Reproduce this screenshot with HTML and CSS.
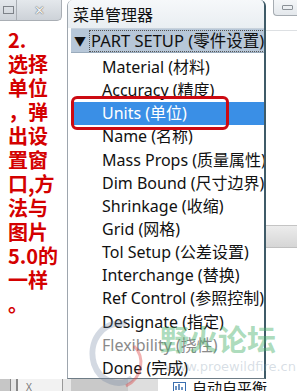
FILE: index.html
```html
<!DOCTYPE html>
<html lang="zh">
<head>
  <meta charset="UTF-8" />
  <title>菜单管理器</title>
  <link rel="stylesheet" href="styles.css">
</head>
<body>

<div class="screen">
  <div class="main">
    <div class="left">
      <div class="winbtns">
        <span class="btn-restore"><i></i></span>
        <span class="btn-close">✕</span>
      </div>
      <div class="note">
        2.<br>选择<br>单位<br>，弹<br>出设<br>置窗<br>口,方<br>法与<br>图片<br>5.0的<br>一样<br>。
      </div>
    </div>

    <div class="menu">
      <div class="menu-title">菜单管理器</div>
      <div class="menu-head">
        <span class="arrow">▼</span>
        <span class="head-text">PART SETUP (零件设置)</span>
      </div>
      <ul class="menu-items">
        <li>Material (材料)</li>
        <li>Accuracy (精度)</li>
        <li class="active">Units (单位)</li>
        <li>Name (名称)</li>
        <li>Mass Props (质量属性)</li>
        <li>Dim Bound (尺寸边界)</li>
        <li>Shrinkage (收缩)</li>
        <li>Grid (网格)</li>
        <li>Tol Setup (公差设置)</li>
        <li>Interchange (替换)</li>
        <li>Ref Control (参照控制)</li>
        <li>Designate (指定)</li>
        <li class="disabled">Flexibility (挠性)</li>
        <li>Done (完成)</li>
      </ul>
    </div>

    <div class="right">
      <div class="minbtn"><i></i></div>
      <div class="rule"></div>
      <div class="band"></div>
    </div>
  </div>

  <div class="taskbar">
    <span class="tb-a"></span>
    <span class="tb-b">X</span>
    <span class="tb-c"></span>
    <span class="tb-d"></span>
    <span class="tb-e"></span>
    <span class="tb-f">
      <svg width="13" height="11" viewBox="0 0 13 11"><rect x="0.5" y="0.5" width="12" height="10" fill="#fff" stroke="#3a6fb0"/><path d="M3 8V4M6 8V2M9 8V5" stroke="#3a6fb0" stroke-width="1.5"/></svg>
      自动自平衡
    </span>
  </div>

  <!-- watermark -->
  <svg class="wm-logo" width="64" height="72" viewBox="0 0 64 72">
    <path d="M40 6 C14 2 2 26 8 46 C14 64 34 70 46 60" fill="none" stroke="rgba(110,130,160,0.3)" stroke-width="6"/>
    <path d="M48 28 C60 40 56 60 40 68" fill="none" stroke="rgba(220,60,60,0.4)" stroke-width="3"/>
  </svg>
  <div class="wm-text">野火论坛</div>
  <div class="wm-url">www.proewildfire.cn</div>
</div>

</body>
</html>
```

FILE: styles.css
```css
body {
  margin: 0;
  background: #fff;
  font-family: "Noto Sans", "Noto Sans CJK SC", sans-serif;
}
.screen {
  position: relative;
  width: 297px;
  height: 391px;
  overflow: hidden;
}
.main {
  display: flex;
  height: 379px;
}

/* left column */
.left {
  width: 67px;
  flex: none;
}
.winbtns {
  display: flex;
  height: 20px;
  width: 61px;
  background: linear-gradient(#e4e8ec, #cdd2d8);
  border: 1px solid #a9aeb4;
  border-top: none;
  border-left: none;
  border-radius: 0 0 5px 0;
}
.btn-restore {
  width: 16px;
  border-right: 1px solid #a9aeb4;
  display: flex;
  align-items: center;
  justify-content: center;
}
.btn-restore i {
  width: 9px;
  height: 6px;
  border: 1px solid #7d8288;
}
.btn-close {
  flex: 1;
  text-align: center;
  font-size: 13px;
  line-height: 20px;
  color: #f4f4f4;
  text-shadow: 0 0 1px #666, 0 0 1px #666;
}
.note {
  padding: 7px 0 0 8px;
  font: bold 20px/24px "Noto Sans CJK SC", sans-serif;
  color: #d40000;
}

/* menu manager */
.menu {
  width: 196px;
  flex: none;
  border-left: 1px solid #9ea6ae;
  border-right: 2px solid #3f5b68;
  border-bottom: 1px solid #6e7c86;
  border-radius: 6px 6px 0 0;
  background: #fff;
  overflow: hidden;
}
.menu-title {
  height: 28px;
  padding-left: 5px;
  font: 16px/28px "Noto Sans CJK SC", sans-serif;
  color: #111;
  background: linear-gradient(#f6f8fa, #e9eef2);
}
.menu-head {
  display: flex;
  align-items: center;
  height: 23px;
  margin-left: 3px;
  padding-left: 3px;
  background: #b7c7d8;
  border-top: 1px solid #c8d2dc;
  border-bottom: 1px solid #9aabbc;
  white-space: nowrap;
  font-size: 16.5px;
  color: #111;
}
.arrow {
  font-size: 12px;
  margin-right: 3px;
}
.head-text {
  border: 1px dotted #555;
  border-right: none;
  padding: 0 1px;
  line-height: 20px;
}
.menu-items {
  list-style: none;
  margin: 0;
  padding: 3px 0 0 3px;
}
.menu-items li {
  height: 23.15px;
  line-height: 23.15px;
  padding-left: 31px;
  font-size: 16px;
  color: #111;
  white-space: nowrap;
}
.menu-items li.active {
  position: relative;
  background: #3a8fe6;
  color: #fff;
}
.menu-items li.active::after {
  content: "";
  position: absolute;
  left: 0;
  top: -6px;
  width: 152px;
  height: 28px;
  border: 3px solid #cc0a12;
  border-radius: 6px;
}
.menu-items li.disabled {
  color: #8a8a8a;
}

/* background window on the right */
.right {
  flex: 1;
}
.minbtn {
  height: 15px;
  margin-left: 7px;
  border: 1px solid #a6acb2;
  border-top: none;
  border-right: none;
  border-radius: 0 0 0 4px;
  background: linear-gradient(#f4f6f8, #e4e8ec);
  display: flex;
  align-items: center;
  padding-left: 8px;
}
.minbtn i {
  width: 9px;
  height: 3px;
  border: 1px solid #8a9096;
  border-radius: 1px;
}
.rule {
  height: 14px;
  border-bottom: 1px solid #dde0e3;
}
.band {
  height: 21px;
  margin-top: 194px;
  background: linear-gradient(#ececec, #d6d6d6);
  border-top: 1px solid #c4c4c4;
  border-bottom: 1px solid #c0c0c0;
}

/* bottom strip */
.taskbar {
  display: flex;
  height: 12px;
  font-size: 13px;
  line-height: 16px;
}
.tb-a {
  width: 16px;
  background: #c6c6c6;
  border-right: 2px solid #888;
  box-shadow: inset -5px 0 0 #e6e6e6, inset -6px 0 0 #888;
}
.tb-b {
  width: 44px;
  padding-left: 8px;
  box-sizing: border-box;
  background: #f2f2f2;
  color: #777;
  font-size: 10px;
}
.tb-c {
  width: 8px;
  background: #e8e8e8;
  border-left: 1px solid #999;
}
.tb-d {
  width: 57px;
  background: #c9c9c9;
}
.tb-e {
  width: 30px;
  background: #dedede;
}
.tb-f {
  flex: 1;
  padding-left: 15px;
  display: flex;
  align-items: flex-start;
  gap: 6px;
  font-family: "Noto Sans CJK SC", sans-serif;
  font-size: 15px;
  line-height: 18px;
  color: #111;
  overflow: hidden;
}
.tb-f svg {
  margin-top: 3px;
}

/* watermark */
.wm-logo {
  position: absolute;
  left: 86px;
  top: 318px;
}
.wm-text {
  position: absolute;
  left: 160px;
  top: 320px;
  font: bold 29px/36px "Noto Sans CJK SC", sans-serif;
  color: rgba(70, 175, 105, 0.45);
}
.wm-url {
  position: absolute;
  left: 165px;
  top: 359px;
  font: 13px/15px "DejaVu Sans", sans-serif;
  color: rgba(140, 160, 180, 0.35);
}
```
